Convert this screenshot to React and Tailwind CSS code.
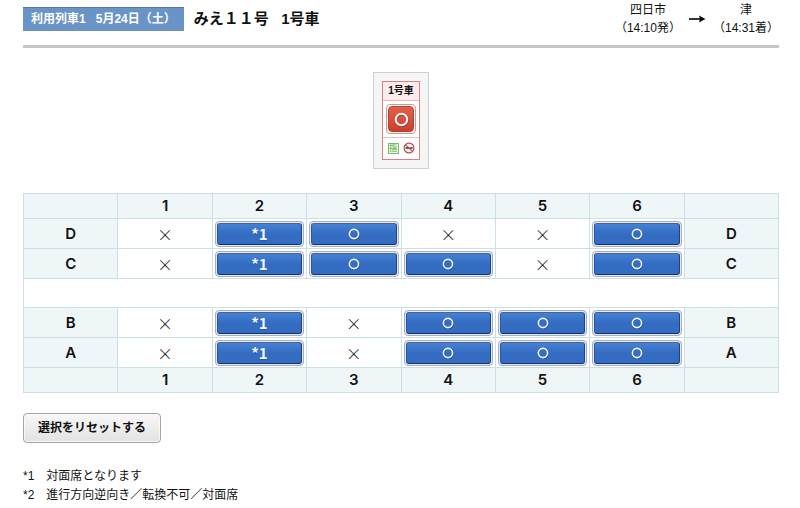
import { useState } from 'react'
import { clsx } from 'clsx'

const COLUMNS = [1, 2, 3, 4, 5, 6]

// x: taken, o: free, *1: free, facing seat
const FRONT_ROWS = [
  { row: 'D', seats: ['x', '*1', 'o', 'x', 'x', 'o'] },
  { row: 'C', seats: ['x', '*1', 'o', 'o', 'x', 'o'] },
]
const BACK_ROWS = [
  { row: 'B', seats: ['x', '*1', 'x', 'o', 'o', 'o'] },
  { row: 'A', seats: ['x', '*1', 'x', 'o', 'o', 'o'] },
]

const NOTES = [
  { mark: '*1', text: '対面席となります' },
  { mark: '*2', text: '進行方向逆向き／転換不可／対面席' },
]

const cell = 'border border-[#c9e0e6] p-0 text-center'
const head = 'bg-[#eef6f8] font-["Inter","Noto_Sans_CJK_JP",sans-serif] text-[15px] leading-5 font-semibold'
const symbol = 'font-["Noto_Sans_CJK_JP",sans-serif]'

function Station({ name, time }) {
  return (
    <div className="text-center">
      <p>{name}</p>
      <p>{time}</p>
    </div>
  )
}

function Header() {
  return (
    <header className="flex h-12 items-start justify-between border-b-3 border-[#c6c6c6]">
      <div className="flex items-center gap-[10px] pt-[7px]">
        <p className="border-t border-[#56779f] bg-[#6a93c7] px-2 text-xs leading-[23px] font-bold whitespace-pre text-white">
          利用列車1{'   '}5月24日（土）
        </p>
        <h1 className="text-[15px] leading-6 font-bold whitespace-pre">みえ１１号{'   '}1号車</h1>
      </div>
      <div className="flex items-center pt-px text-xs leading-[18px]">
        <Station name="四日市" time="（14:10発）" />
        <svg className="mx-[7px]" width="18" height="10" viewBox="0 0 18 10" aria-hidden="true">
          <path d="M1 5h12" stroke="#000" strokeWidth="1.6" />
          <path d="M11 1.6 17.4 5 11 8.4 12 5z" fill="#000" />
        </svg>
        <Station name="津" time="（14:31着）" />
      </div>
    </header>
  )
}

function Circle({ size }) {
  return (
    <svg width={size} height={size} viewBox="0 0 12 12" fill="none" aria-hidden="true">
      <circle cx="6.3" cy="6.6" r="4.6" stroke="#000" strokeOpacity="0.35" strokeWidth="1.6" />
      <circle cx="6" cy="6" r="4.6" stroke="#f3f8ff" strokeWidth="1.6" />
    </svg>
  )
}

function NoSmoking() {
  return (
    <svg width="12" height="12" viewBox="0 0 12 12" role="img" aria-label="禁煙">
      <path d="M2.5 5.2h4v1.6h-4zM7 5.2h2.6v1.6H7z" fill="#3c2a2a" />
      <circle cx="6" cy="6" r="4.9" fill="none" stroke="#c9474a" strokeWidth="1.2" />
      <path d="m2.6 2.8 6.8 6.4" stroke="#c9474a" strokeWidth="1.1" />
    </svg>
  )
}

function CarCard() {
  return (
    <section className="mx-auto w-14 border border-[#cfcfcf] bg-[#f5f5f5] p-2">
      <div className="border border-[#db8081] bg-white">
        <h2 className="border-b border-[#edb9b9] bg-[#fdecec] text-center text-[10px] leading-[18px] font-bold">
          1号車
        </h2>
        <div className="flex justify-center py-[3px]">
          <button
            type="button"
            aria-label="1号車 ○"
            className="h-[30px] w-[30px] rounded border border-[#cf9a94] bg-white p-px"
          >
            <span className="flex h-full items-center justify-center rounded-sm border border-[#c03d2a] bg-linear-to-b from-[#e0604d] to-[#cc402b]">
              <Circle size={15} />
            </span>
          </button>
        </div>
        <div className="flex items-center justify-center gap-1 border-t border-[#edb9b9] pt-1 pb-[5px]">
          <span className="h-[11px] w-[11px] border border-[#79bd68] bg-[#eff9eb] text-center text-[8px] leading-[9px] text-[#4fa43c]">
            指
          </span>
          <NoSmoking />
        </div>
      </div>
    </section>
  )
}

function Seat({ id, status, selected, onToggle }) {
  if (status === 'x') {
    return <td className={clsx(cell, symbol, 'text-base leading-5 font-light')}>×</td>
  }
  return (
    <td className={cell}>
      <div className="px-[2px]">
        <button
          type="button"
          aria-label={`${id} ${status === 'o' ? '○' : status}`}
          aria-pressed={selected}
          onClick={() => onToggle(id)}
          className="block h-[26px] w-full rounded border border-[#a9abc0] bg-[#e4eaf6] p-px"
        >
          <span
            className={clsx(
              symbol,
              'flex h-full items-center justify-center rounded-[3px] border border-t-[#4a6389] border-r-[#1b4285] border-b-[#0f3273] border-l-[#2558a8] text-[15px] leading-none font-bold text-[#f1f6ff] text-shadow-xs',
              selected
                ? 'bg-[#cc402b]'
                : 'bg-linear-to-b from-[#4482d4] to-[#346cc2] to-50%',
            )}
          >
            {status === 'o' ? <Circle size={12} /> : status}
          </span>
        </button>
      </div>
    </td>
  )
}

function NumberRow() {
  return (
    <tr className="h-[25px]">
      <td className={clsx(cell, head)} />
      {COLUMNS.map((n) => (
        <th key={n} scope="col" className={clsx(cell, head)}>
          {n}
        </th>
      ))}
      <td className={clsx(cell, head)} />
    </tr>
  )
}

function SeatRows({ rows, selected, onToggle }) {
  return rows.map(({ row, seats }) => (
    <tr key={row} className="h-[30px]">
      <th scope="row" className={clsx(cell, head)}>
        {row}
      </th>
      {seats.map((status, i) => {
        const id = `${COLUMNS[i]}${row}`
        return (
          <Seat key={id} id={id} status={status} selected={selected === id} onToggle={onToggle} />
        )
      })}
      <th scope="row" className={clsx(cell, head)}>
        {row}
      </th>
    </tr>
  ))
}

export default function App() {
  const [selected, setSelected] = useState(null)
  const toggle = (id) => setSelected((prev) => (prev === id ? null : id))

  return (
    <main className='bg-white pr-[21px] pb-1 pl-[23px] font-["Liberation_Sans","Noto_Sans_CJK_JP",sans-serif] text-[#111]'>
      <Header />
      <div className="mt-6">
        <CarCard />
      </div>
      <table className="mt-6 w-full table-fixed border-collapse">
        <thead>
          <NumberRow />
        </thead>
        <tbody>
          <SeatRows rows={FRONT_ROWS} selected={selected} onToggle={toggle} />
          <tr className="h-[29px]">
            <td colSpan={8} className={cell} />
          </tr>
          <SeatRows rows={BACK_ROWS} selected={selected} onToggle={toggle} />
        </tbody>
        <tfoot>
          <NumberRow />
        </tfoot>
      </table>
      <button
        type="button"
        onClick={() => setSelected(null)}
        className="mt-5 h-[30px] rounded border border-[#a5a5a5] bg-linear-to-b from-[#f8f8f8] to-[#e2e2e2] px-[14px] text-xs font-bold inset-ring inset-ring-white/70"
      >
        選択をリセットする
      </button>
      <ul className="mt-6 text-xs leading-[19px]">
        {NOTES.map(({ mark, text }) => (
          <li key={mark} className="flex gap-3">
            <span>{mark}</span>
            <span>{text}</span>
          </li>
        ))}
      </ul>
    </main>
  )
}
